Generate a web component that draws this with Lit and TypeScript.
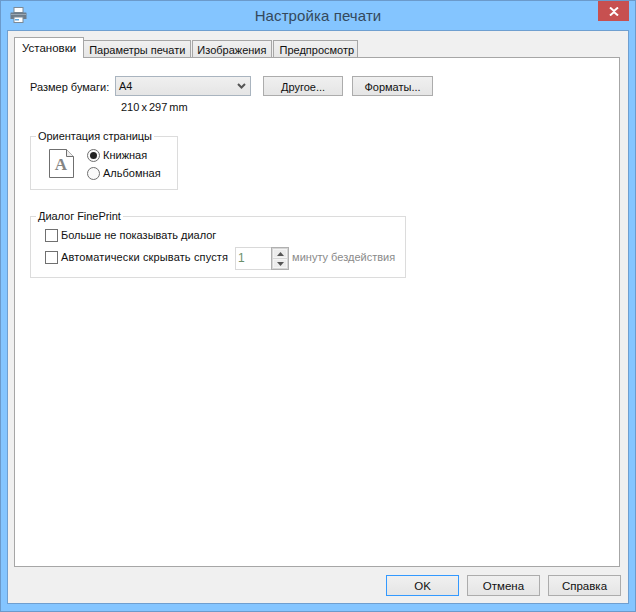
import { LitElement, html, css } from "lit";
import { customElement } from "lit/decorators.js";

@customElement("app-root")
export class AppRoot extends LitElement {
  static styles = css`
    :host { display: block; width: 636px; height: 612px; font-family: "Liberation Sans", Arial, sans-serif; font-size: 11px; color: #111; }
    * { box-sizing: border-box; }
    .win { width: 636px; height: 612px; background: #84c5ff; border: 1px solid #6b9acb; display: flex; flex-direction: column; padding: 0 6px 7px 6px; }
    .titlebar { height: 29px; flex: none; display: flex; align-items: flex-start; position: relative; justify-content: center; margin: 0 -6px; }
    .appicon { position: absolute; left: 9px; top: 6px; }
    .title { font-size: 15px; color: #34495c; margin-top: 6px; line-height: 18px; letter-spacing: 0.1px; }
    .close { position: absolute; right: 6px; top: 0; width: 31px; height: 20px; background: #c75050; display: flex; align-items: center; justify-content: center; }
    .client { flex: 1; background: #f0f0f0; border: 1px solid #6f9fd0; padding: 7px 8px 7px 6px; display: flex; flex-direction: column; min-height: 0; }
    .tabs { display: flex; align-items: flex-end; height: 20px; flex: none; position: relative; z-index: 1; margin-bottom: -1px; }
    .tab { height: 18px; padding: 1px 5px 0; border: 1px solid #a6a6a6; background: linear-gradient(#f0f0f0, #e6e6e6); line-height: 17px; white-space: nowrap; margin-right: 1px; }
    .tab.active { height: 21px; font-size: 11.5px; background: #fff; border: 1px solid #a6a6a6; border-bottom: none; padding: 1px 7px 0; line-height: 19px; margin-right: 0; }
    .tab.second { border-left: none; }
    .tab.third { padding: 1px 5px 0 4px; }
    .tab.fourth { padding: 1px 3px 0 5px; }
    .panel { flex: 1; background: #fff; border: 1px solid #a6a6a6; padding: 18px 15px; min-height: 0; }
    .paperrow { display: flex; align-items: center; height: 20px; }
    .lbl { width: 85px; flex: none; padding-top: 2px; }
    .combo { width: 136px; height: 20px; border: 1px solid #a9b4bf; background: linear-gradient(#f0f0f0, #e5e5e5); display: flex; align-items: center; justify-content: space-between; padding: 0 4px 0 3px; }
    .btn { height: 20px; border: 1px solid #acacac; background: linear-gradient(#f0f0f0, #e5e5e5); display: flex; align-items: center; justify-content: center; flex: none; padding-top: 1px; }
    .other { width: 80px; margin-left: 12px; }
    .formats { width: 81px; margin-left: 9px; }
    .dim { margin: 4px 0 0 91px; line-height: 14px; height: 14px; word-spacing: -1px; }
    fieldset { margin: 0; padding: 0; border: 1px solid #dcdcdc; min-width: 0; }
    legend { padding: 0 2px; margin-left: 5px; line-height: 14px; white-space: nowrap; letter-spacing: -0.04px; }
    .orient { width: 148px; height: 61px; margin-top: 15px; }
    .orient-body { display: flex; gap: 13px; padding: 5px 0 0 18px; }
    .doc { margin-top: 1px; flex: none; }
    .radios { display: flex; flex-direction: column; gap: 4px; }
    .opt { display: flex; align-items: center; gap: 3px; height: 14px; line-height: 14px; white-space: nowrap; }
    .radio { width: 13px; height: 13px; border-radius: 50%; border: 1px solid #707070; background: #fafafa; display: flex; align-items: center; justify-content: center; flex: none; }
    .dot { width: 7px; height: 7px; border-radius: 50%; background: #222; }
    .dialog { width: 376px; height: 69px; margin-top: 19px; }
    .dialog-body { display: flex; flex-direction: column; gap: 6px; padding: 4px 0 0 14px; }
    .row { display: flex; align-items: center; height: 16px; white-space: nowrap; }
    .check { width: 13px; height: 13px; border: 1px solid #707070; background: #fff; flex: none; margin-right: 3px; }
    .wide { letter-spacing: 0.14px; }
    .spin { width: 54px; height: 23px; border: 1px solid #d9d9d9; background: #fff; margin: 3px 0 0 7px; display: flex; flex: none; }
    .val { flex: 1; padding: 3px 0 0 2px; color: #6a8f6a; font-size: 12px; }
    .arrows { width: 18px; border: 1px solid #b0b0b0; background: #d6d6d6; display: flex; flex-direction: column; gap: 1px; padding: 1px; flex: none; margin: -1px -1px -1px 0; }
    .arrows div { flex: 1; background: #ececec; border: 1px solid #f4f4f4; display: flex; align-items: center; justify-content: center; }
    .muted { color: #8a8a8a; margin-left: 3px; }
    .footer { display: flex; justify-content: flex-end; gap: 8px; margin: 8px -1px 0 0; flex: none; }
    .foot { width: 73px; height: 21px; font-size: 11.5px; padding-top: 0; }
    .ok { border-color: #3399ff; }
  `;

  render() {
    return html`<div class="win">
      <div class="titlebar">
        <svg class="appicon" width="17" height="16" viewBox="0 0 17 16">
          <rect x="4" y="0.5" width="9" height="5" fill="#fff" stroke="#7d8a96"/>
          <path d="M1 5.5h15a.5.5 0 0 1 .5.5v6h-16V6a.5.5 0 0 1 .5-.5z" fill="#6d7c8a"/>
          <rect x="1" y="7" width="15" height="1" fill="#9aa7b2"/>
          <rect x="4" y="10" width="9" height="5.5" fill="#fff" stroke="#7d8a96"/>
          <rect x="5" y="12" width="4" height="1.5" fill="#5fa8e0"/>
        </svg>
        <div class="title">Настройка печати</div>
        <div class="close">
          <svg width="10" height="9" viewBox="0 0 10 9"><path d="M1 .5 5 4l4-3.5M1 8.500 5 5l4 3.500" stroke="#fff" stroke-width="2" fill="none"/></svg>
        </div>
      </div>
      <div class="client">
        <div class="tabs">
          <div class="tab active">Установки</div>
          <div class="tab second">Параметры печати</div>
          <div class="tab third">Изображения</div>
          <div class="tab fourth">Предпросмотр</div>
        </div>
        <div class="panel">
          <div class="paperrow">
            <div class="lbl">Размер бумаги:</div>
            <div class="combo"><span>A4</span>
              <svg width="9" height="6" viewBox="0 0 9 6"><path d="M1 1l3.500 3.500L8 1" fill="none" stroke="#555" stroke-width="2"/></svg>
            </div>
            <div class="btn other">Другое...</div>
            <div class="btn formats">Форматы...</div>
          </div>
          <div class="dim">210 x 297 mm</div>
          <fieldset class="orient">
            <legend>Ориентация страницы</legend>
            <div class="orient-body">
              <svg class="doc" width="25" height="29" viewBox="0 0 25 29">
                <path d="M.5 .5H17.500L24.500 7.500V28.500H.5z" fill="#fff" stroke="#6f6f6f"/>
                <path d="M17.500 .5V7.500H24.500" fill="#eee" stroke="#6f6f6f"/>
                <text x="12" y="21" text-anchor="middle" font-family="Liberation Serif" font-weight="700" font-size="17" fill="#858585">A</text>
              </svg>
              <div class="radios">
                <div class="opt"><span class="radio"><span class="dot"></span></span>Книжная</div>
                <div class="opt"><span class="radio"></span>Альбомная</div>
              </div>
            </div>
          </fieldset>
          <fieldset class="dialog">
            <legend>Диалог FinePrint</legend>
            <div class="dialog-body">
              <div class="row"><span class="check"></span>Больше не показывать диалог</div>
              <div class="row"><span class="check"></span><span class="wide">Автоматически скрывать спустя</span>
                <div class="spin"><div class="val">1</div>
                  <div class="arrows">
                    <div><svg width="7" height="4"><path d="M3.500 0 7 4H0z" fill="#555"/></svg></div>
                    <div><svg width="7" height="4"><path d="M0 0h7L3.500 4z" fill="#555"/></svg></div>
                  </div>
                </div>
                <span class="muted">минуту бездействия</span>
              </div>
            </div>
          </fieldset>
        </div>
        <div class="footer">
          <div class="btn foot ok">OK</div>
          <div class="btn foot">Отмена</div>
          <div class="btn foot">Справка</div>
        </div>
      </div>
    </div>`;
  }
}
